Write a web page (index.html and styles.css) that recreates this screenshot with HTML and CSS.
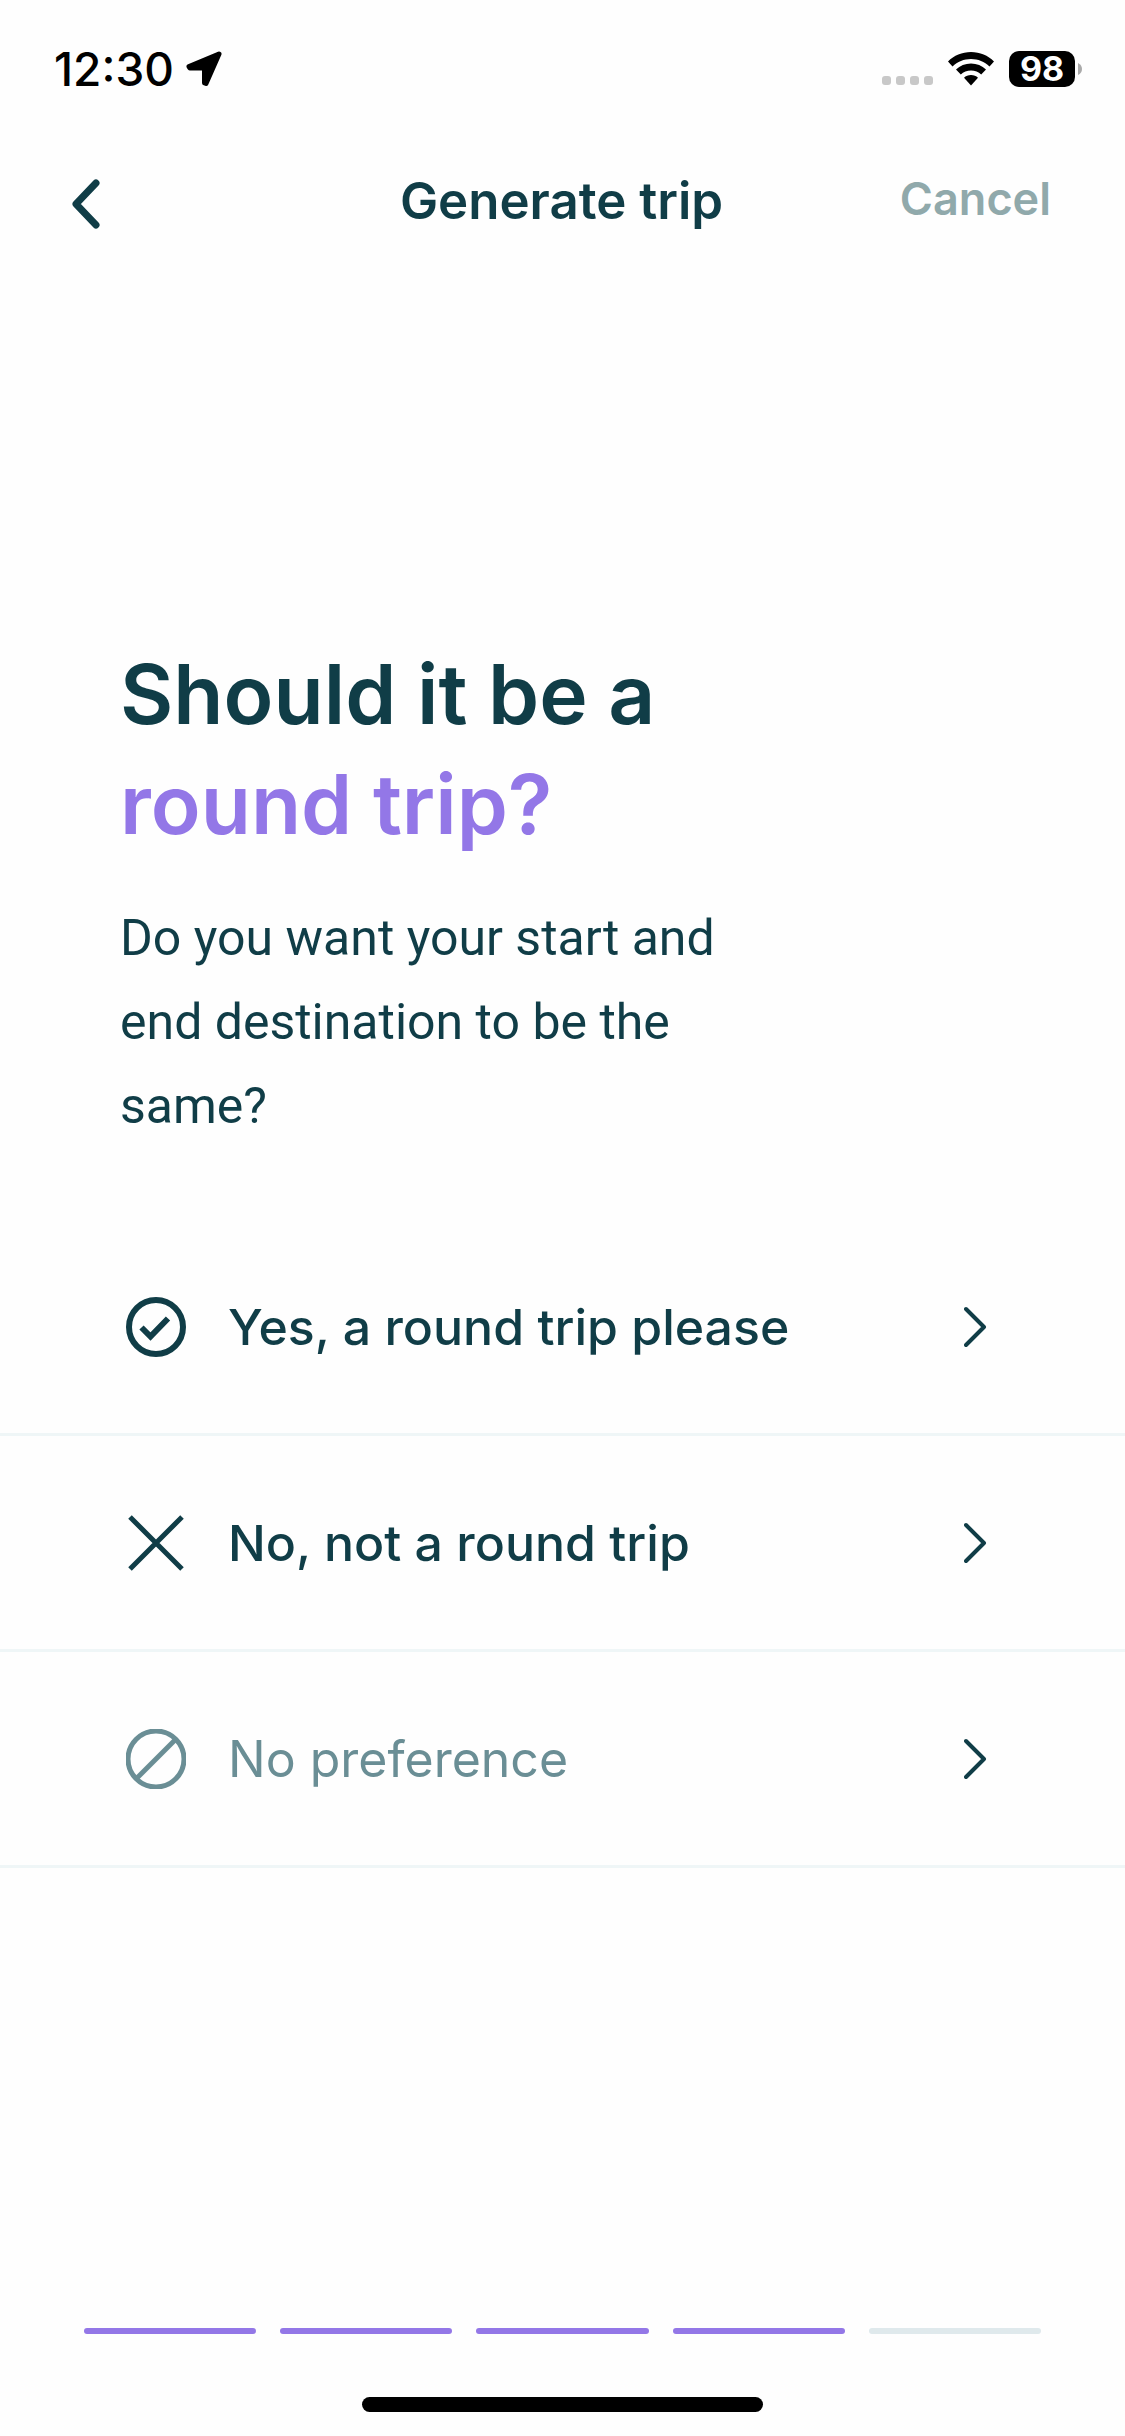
FILE: index.html
```html
<!DOCTYPE html>
<html lang="en">
<head>
    <meta charset="UTF-8">
    <meta name="viewport" content="width=device-width, initial-scale=1.0">
    <title>Generate trip</title>
    <link rel="stylesheet" href="styles.css">
</head>
<body>
    <div class="status-bar">
        <div class="status-left">
            <span class="time">12:30</span>
            <svg class="location" viewBox="0 0 36 36" aria-hidden="true">
                <path d="M33 3L3 15.500L4 17H18.500V32L20 32.500z" fill="currentColor" stroke="currentColor" stroke-width="5" stroke-linejoin="round"/>
            </svg>
        </div>
        <div class="status-right">
            <div class="signal"><i></i><i></i><i></i><i></i></div>
            <svg class="wifi" viewBox="0 0 46 34" aria-hidden="true">
                <path d="M23 0C14 0 6 3.500 0 9.500L4.500 14.500C9.500 9.700 16 7 23 7S36.500 9.700 41.500 14.500L46 9.500C40 3.500 32 0 23 0z"/>
                <path d="M23 11.500C17.200 11.500 12 13.700 8 17.500L12.800 22.500C15.500 20 19 18.500 23 18.500S30.500 20 33.200 22.500L38 17.500C34 13.700 28.800 11.500 23 11.500z"/>
                <path d="M23 23C20.200 23 17.800 24 16 25.800L23 33.500L30 25.800C28.200 24 25.800 23 23 23z"/>
            </svg>
            <div class="battery">
                <span class="battery-level">98</span>
                <svg class="battery-cap" viewBox="0 0 4 12" aria-hidden="true"><path d="M0 0Q4 2 4 6T0 12z"/></svg>
            </div>
        </div>
    </div>

    <header class="header">
        <button class="back" aria-label="Back">
            <svg viewBox="0 0 30 50" aria-hidden="true"><path d="M24 4L4 25L24 46"/></svg>
        </button>
        <h1 class="title">Generate trip</h1>
        <button class="cancel">Cancel</button>
    </header>

    <main>
        <section class="question">
            <h2>Should it be a<br><span class="highlight">round trip?</span></h2>
            <p>Do you want your start and<br>end destination to be the<br>same?</p>
        </section>

        <div class="options">
            <button class="option">
                <svg class="icon" viewBox="0 0 60 60" aria-hidden="true">
                    <circle cx="30" cy="30" r="27" stroke-width="6"/>
                    <path d="M15.500 30.500L24.500 39.500L42 21.500" stroke-width="6"/>
                </svg>
                <span class="label">Yes, a round trip please</span>
                <svg class="chevron" viewBox="0 0 24 42" aria-hidden="true"><path d="M2 3L20 21L2 39"/></svg>
            </button>
            <button class="option">
                <svg class="icon" viewBox="0 0 60 60" aria-hidden="true">
                    <path d="M4 4L56 56M56 4L4 56" stroke-width="5"/>
                </svg>
                <span class="label">No, not a round trip</span>
                <svg class="chevron" viewBox="0 0 24 42" aria-hidden="true"><path d="M2 3L20 21L2 39"/></svg>
            </button>
            <button class="option muted">
                <svg class="icon" viewBox="0 0 60 60" aria-hidden="true">
                    <circle cx="30" cy="30" r="28" stroke-width="5"/>
                    <path d="M10.500 49.500L49.500 10.500" stroke-width="5"/>
                </svg>
                <span class="label">No preference</span>
                <svg class="chevron" viewBox="0 0 24 42" aria-hidden="true"><path d="M2 3L20 21L2 39"/></svg>
            </button>
        </div>
    </main>

    <footer class="footer">
        <div class="progress" role="progressbar" aria-label="Step" aria-valuemin="0" aria-valuemax="5" aria-valuenow="4">
            <span class="step done"></span>
            <span class="step done"></span>
            <span class="step done"></span>
            <span class="step done"></span>
            <span class="step"></span>
        </div>
        <div class="home-indicator"></div>
    </footer>
</body>
</html>
```
FILE: styles.css
```css
* {
    box-sizing: border-box;
}
body {
    margin: 0;
    min-height: 100vh;
    display: flex;
    flex-direction: column;
    background-color: #fefefe;
    color: #103d47;
    font-family: Inter, "Liberation Sans", sans-serif;
}
h1, h2, p {
    margin: 0;
}
button {
    padding: 0;
    border: none;
    background: none;
    color: inherit;
    font-family: inherit;
    cursor: pointer;
}
svg {
    display: block;
    flex: none;
}

/* Status bar */
.status-bar {
    display: flex;
    justify-content: space-between;
    align-items: center;
    height: 132px;
    padding: 6px 43px 0 54px;
    color: #000;
}
.status-left, .status-right, .battery {
    display: flex;
    align-items: center;
}
.status-left {
    gap: 12px;
}
.time {
    font-size: 46px;
    font-weight: 500;
}
.location {
    width: 36px;
    height: 36px;
}
.status-right {
    gap: 15px;
}
.signal {
    display: flex;
    gap: 5px;
    padding-top: 22px;
}
.signal i {
    width: 9px;
    height: 9px;
    border-radius: 3px;
    background-color: #c8c8c8;
}
.wifi {
    width: 46px;
    height: 34px;
}
.battery {
    gap: 3px;
}
.battery-level {
    width: 66px;
    height: 36px;
    border-radius: 10px;
    background-color: #000;
    color: #fff;
    font-size: 34px;
    font-weight: 700;
    line-height: 36px;
    text-align: center;
}
.battery-cap {
    width: 4px;
    height: 12px;
    fill: #aaa;
}

/* Header */
.header {
    display: grid;
    grid-template-columns: 1fr auto 1fr;
    align-items: center;
    height: 136px;
    padding: 0 74px 0 72px;
}
.back {
    justify-self: start;
    padding-top: 8px;
}
.back svg {
    width: 30px;
    height: 50px;
    fill: none;
    stroke: currentColor;
    stroke-width: 7;
    stroke-linecap: round;
    stroke-linejoin: round;
}
.title {
    font-size: 51px;
    font-weight: 600;
}
.cancel {
    justify-self: end;
    padding-bottom: 4px;
    color: #90a9ab;
    font-size: 45px;
    font-weight: 600;
}

/* Question */
.question {
    padding: 372px 120px 72px;
}
.question h2 {
    margin-bottom: 36px;
    font-size: 82px;
    font-weight: 600;
    line-height: 110px;
}
.highlight {
    color: #9377e7;
}
.question p {
    font-family: Roboto, "Liberation Sans", sans-serif;
    font-size: 50px;
    line-height: 84px;
}

/* Options */
.option {
    display: flex;
    align-items: center;
    gap: 42px;
    width: 100%;
    height: 216px;
    padding: 0 137px 0 126px;
    border-bottom: 3px solid #eff6f7;
    text-align: left;
}
.option svg {
    fill: none;
    stroke: currentColor;
}
.icon {
    width: 60px;
    height: 60px;
}
.label {
    flex: 1;
    font-size: 50px;
    font-weight: 500;
}
.chevron {
    width: 24px;
    height: 42px;
    color: #103d47;
    stroke-width: 4;
    stroke-linecap: round;
    stroke-linejoin: round;
}
.option.muted {
    color: #6a8e95;
}
.muted .label {
    font-weight: 400;
}

/* Footer */
.footer {
    margin-top: auto;
    padding: 0 84px 24px;
}
.progress {
    display: flex;
    gap: 24px;
}
.step {
    flex: 1;
    height: 6px;
    border-radius: 3px;
    background-color: #dfe9ec;
}
.step.done {
    background-color: #9377e7;
}
.home-indicator {
    width: 42%;
    height: 15px;
    margin: 63px auto 0;
    border-radius: 8px;
    background-color: #000;
}
```
